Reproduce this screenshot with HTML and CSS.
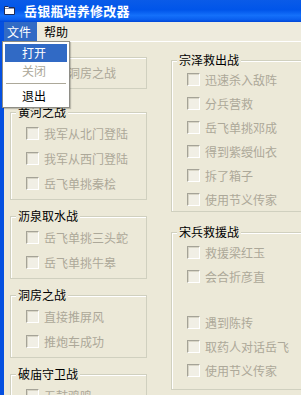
FILE: index.html
```html
<!DOCTYPE html>
<html lang="zh-CN">
<head>
    <meta charset="UTF-8">
    <meta name="viewport" content="width=device-width, initial-scale=1.0">
    <title>岳银瓶培养修改器</title>
    <link rel="stylesheet" href="styles.css">
</head>
<body>
<div class="window">
    <!-- Title bar -->
    <div class="titlebar">
        <svg class="app-icon" width="11" height="10" viewBox="0 0 11 10">
            <path d="M0.5 1.5 H4 L5 2.5 H10.5 V9.5 H0.5 Z" fill="#fff" stroke="#1c2a5a"/>
            <path d="M1 3.5 H10" stroke="#8a94b0"/>
        </svg>
        <span class="title">岳银瓶培养修改器</span>
    </div>

    <div class="frame">
        <!-- Menu bar -->
        <div class="menubar">
            <span class="menu-item active">文件</span>
            <span class="menu-item">帮助</span>
        </div>

        <div class="client">
            <!-- Left column -->
            <div class="column left">
                <div class="group first">
                    <div class="rows">
                        <div class="check"><span class="box"></span><span class="label">直达洞房之战</span></div>
                    </div>
                </div>

                <div class="group">
                    <div class="group-title">黄河之战</div>
                    <div class="rows">
                        <div class="check"><span class="box"></span><span class="label">我军从北门登陆</span></div>
                        <div class="check"><span class="box"></span><span class="label">我军从西门登陆</span></div>
                        <div class="check"><span class="box"></span><span class="label">岳飞单挑秦桧</span></div>
                    </div>
                </div>

                <div class="group">
                    <div class="group-title">沥泉取水战</div>
                    <div class="rows">
                        <div class="check"><span class="box"></span><span class="label">岳飞单挑三头蛇</span></div>
                        <div class="check"><span class="box"></span><span class="label">岳飞单挑牛皋</span></div>
                    </div>
                </div>

                <div class="group">
                    <div class="group-title">洞房之战</div>
                    <div class="rows">
                        <div class="check"><span class="box"></span><span class="label">直接推屏风</span></div>
                        <div class="check"><span class="box"></span><span class="label">推炮车成功</span></div>
                    </div>
                </div>

                <div class="group">
                    <div class="group-title">破庙守卫战</div>
                    <div class="rows">
                        <div class="check"><span class="box"></span><span class="label">五鼓鸡鸣</span></div>
                    </div>
                </div>
            </div>

            <!-- Right column -->
            <div class="column right">
                <div class="group">
                    <div class="group-title">宗泽救出战</div>
                    <div class="rows tight">
                        <div class="check"><span class="box"></span><span class="label">迅速杀入敌阵</span></div>
                        <div class="check"><span class="box"></span><span class="label">分兵营救</span></div>
                        <div class="check"><span class="box"></span><span class="label">岳飞单挑邓成</span></div>
                        <div class="check"><span class="box"></span><span class="label">得到紫绶仙衣</span></div>
                        <div class="check"><span class="box"></span><span class="label">拆了箱子</span></div>
                        <div class="check"><span class="box"></span><span class="label">使用节义传家</span></div>
                    </div>
                </div>

                <div class="group second">
                    <div class="group-title">宋兵救援战</div>
                    <div class="rows tight">
                        <div class="check"><span class="box"></span><span class="label">救援梁红玉</span></div>
                        <div class="check"><span class="box"></span><span class="label">会合折彦直</span></div>
                        <div class="spacer"></div>
                        <div class="check"><span class="box"></span><span class="label">遇到陈抟</span></div>
                        <div class="check"><span class="box"></span><span class="label">取药人对话岳飞</span></div>
                        <div class="check"><span class="box"></span><span class="label">使用节义传家</span></div>
                    </div>
                </div>
            </div>
        </div>
    </div>

    <!-- Open "文件" menu -->
    <div class="dropdown">
        <div class="drop-item hover">打开</div>
        <div class="drop-item disabled">关闭</div>
        <div class="sep"></div>
        <div class="drop-item">退出</div>
    </div>
</div>
</body>
</html>
```

FILE: styles.css
```css
html, body {
    margin: 0;
    overflow: hidden;
}
body {
    font-family: "Noto Sans CJK SC", "Liberation Sans", sans-serif;
    font-size: 12px;
    background: #ECE9D8;
}
.window {
    position: relative;
    width: 301px;
    height: 395px;
    overflow: hidden;
    background: #ECE9D8;
}
.titlebar {
    height: 22px;
    display: flex;
    align-items: center;
    background: linear-gradient(to bottom, #0A5BE8 0%, #0055EA 45%, #1470FA 70%, #0A60F0 88%, #0046D6 100%);
}
.app-icon {
    margin-left: 4px;
    margin-top: -2px;
}
.title {
    margin-left: 9px;
    color: #fff;
    font-weight: bold;
    font-size: 13px;
    line-height: 22px;
    letter-spacing: 0.2px;
}
.frame {
    border-left: 4px solid #0550E0;
}
.menubar {
    height: 19px;
    display: flex;
    gap: 4px;
    border-bottom: 1px solid #fff;
    background: #EEEBDD;
}
.menu-item {
    padding: 0 6px 0 3px;
    line-height: 19px;
    color: #000;
}
.menu-item.active {
    background: #316AC5;
    color: #fff;
}
.client {
    display: flex;
    gap: 24px;
    padding-left: 6px;
}
.column.left {
    width: 137px;
    flex: none;
    padding-top: 15px;
}
.column.right {
    width: 150px;
    flex: none;
    padding-top: 18px;
}
.group {
    border: 1px solid #D0D0BF;
    box-shadow: inset 1px 1px 0 #fff;
    margin-top: 16px;
}
.group.first {
    margin-top: 0;
}
.column.left .group.first + .group {
    margin-top: 23px;
}
.column.right .group:first-child {
    margin-top: 0;
}
.group.second {
    margin-top: 20px;
}
.group-title {
    display: table;
    margin: -8px 0 0 5px;
    padding: 0 2px;
    background: #ECE9D8;
    color: #000;
    line-height: 14px;
}
.rows {
    padding: 2px 0 3px;
}
.rows.tight {
    padding: 0;
}
.group.second .rows.tight {
    padding: 1px 0 7px;
}
.check {
    display: flex;
    align-items: center;
    height: 25px;
    padding-left: 15px;
}
.rows.tight .check {
    height: 24px;
}
.spacer {
    height: 22px;
}
.box {
    width: 11px;
    height: 11px;
    border: 1px solid;
    border-color: #A5A397 #FFFFFF #FFFFFF #A5A397;
    box-shadow: inset 1px 1px 0 #D8D5C6;
    background: #F1EFE5;
    flex: none;
}
.label {
    margin-left: 5px;
    color: #ACA899;
    white-space: nowrap;
}
.dropdown {
    position: absolute;
    left: 2px;
    top: 41px;
    width: 68px;
    box-sizing: border-box;
    padding: 2px;
    border: 1px solid #8E8D86;
    background: #fff;
    box-shadow: 1px 1px 1px rgba(0, 0, 0, 0.2);
}
.drop-item {
    height: 18px;
    line-height: 18px;
    padding-left: 17px;
    color: #000;
}
.drop-item.hover {
    background: #316AC5;
    color: #fff;
}
.drop-item.disabled {
    color: #ACA899;
}
.sep {
    height: 1px;
    margin: 3px 1px;
    background: #ACA899;
}
```
